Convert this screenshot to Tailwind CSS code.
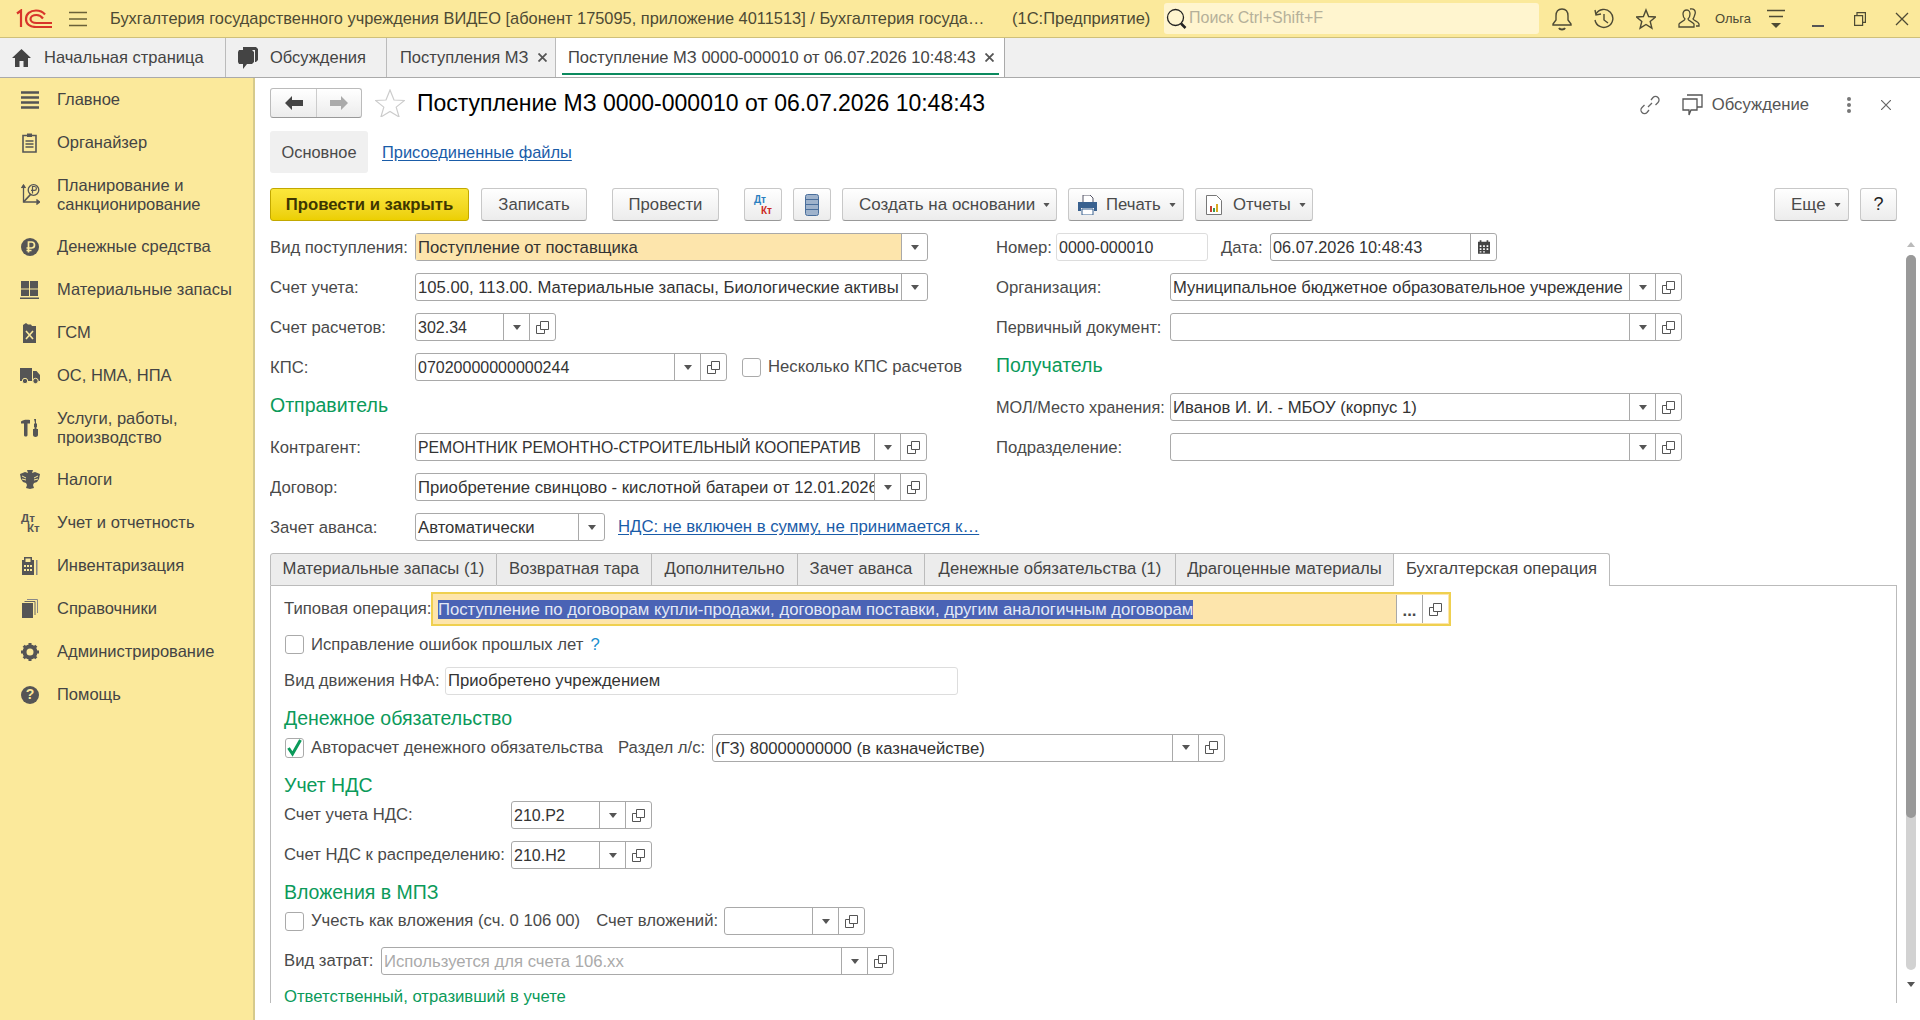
<!DOCTYPE html>
<html lang="ru">
<head>
<meta charset="UTF-8">
<title>Поступление МЗ</title>
<script src="https://cdn.jsdelivr.net/npm/@tailwindcss/browser@4"></script>
</head>
<body class="bg-white">
<svg class="hidden" xmlns="http://www.w3.org/2000/svg">
  <symbol id="dd" viewBox="0 0 8 5"><path d="M0 0h8L4 5z" fill="#555"/></symbol>
  <symbol id="copy" viewBox="0 0 13 13"><path d="M4.500 4.500H.500v8h8v-4M4.500.500h8v8h-8z" fill="none" stroke="#555"/></symbol>
</svg>
<div class="flex h-[1020px] w-[1920px] flex-col overflow-hidden font-['Liberation_Sans',Arial,sans-serif] text-[16.7px] text-[#4a4a4a]">

  <!-- top bar -->
  <header class="flex h-[38px] shrink-0 items-center border-b border-[#cfc07a] bg-[#fbe99b] text-[16.500px]">
    <svg class="ml-[15px] h-[19px] w-[38px]" viewBox="0 0 38 19" fill="none" stroke="#d8342a" stroke-width="2.200">
      <path d="M2 4.500 6 1.500V18"/>
      <path d="M30 5.500C28 3 25 1.500 21 1.500 15 1.500 11 5 11 10s4 8 10 8h16"/>
      <path d="M28 9.500C26.500 7.500 24 6 21.500 6 18 6 15.500 7.800 15.500 10s2.500 4 6 4H37"/>
    </svg>
    <svg class="ml-[16px] h-[16px] w-[18px]" viewBox="0 0 18 16" stroke="#6a6138" stroke-width="1.500"><path d="M0 1.500h18M0 8h18M0 14.500h18"/></svg>
    <div class="ml-[23px] w-[902px] truncate text-[16.400px] text-[#4d4a34]">Бухгалтерия государственного учреждения ВИДЕО [абонент 175095, приложение 4011513] / Бухгалтерия госуда…</div>
    <div class="w-[152px] whitespace-nowrap text-[#4d4a34]">(1С:Предприятие)</div>
    <div class="flex h-[31px] w-[375px] items-center rounded-[3px] bg-[#fff5cf]">
      <svg class="ml-[2px] h-[22px] w-[21px]" viewBox="0 0 21 22" fill="none" stroke="#222"><circle cx="9.500" cy="9.500" r="8" stroke-width="1.300"/><path d="M15 15.500l4.500 4.500" stroke-width="2.500"/></svg>
      <span class="ml-[2px] -translate-y-px text-[16px] text-[#b5b09a]">Поиск Ctrl+Shift+F</span>
    </div>
    <div class="ml-[13px] flex items-center gap-[22px]">
      <svg class="h-[24px] w-[20px]" viewBox="0 0 20 24" fill="none" stroke="#4d4a34" stroke-width="1.400"><path d="M10 2c-4 0-6 3-6 7v4l-3 4v1h18v-1l-3-4V9c0-4-2-7-6-7z"/><path d="M7 21c1 2 5 2 6 0" stroke-width="2"/></svg>
      <svg class="h-[22px] w-[20px]" viewBox="0 0 20 22" fill="none" stroke="#4d4a34" stroke-width="1.400"><path d="M2 6A9 9 0 1 1 1 12"/><path d="M1 2l1 5 5-1" /><path d="M10 6v6l4 3"/></svg>
      <svg class="h-[22px] w-[20px]" viewBox="0 0 20 22" fill="none" stroke="#4d4a34" stroke-width="1.400"><path d="M10 2l2.600 6.500 6.900.500-5.300 4.400 1.700 6.800-5.900-3.700-5.900 3.700 1.700-6.800L.500 9l6.900-.500z"/></svg>
      <svg class="h-[22px] w-[22px]" viewBox="0 0 22 22" fill="none" stroke="#4d4a34" stroke-width="1.300"><path d="M9 2c-3 0-4 2-4 4s1 4 2 5c0 2-5 3-6 5v3h15v-3c-1-2-6-3-6-5 1-1 2-3 2-5s-1-4-3-4z"/><path d="M12 1c4-1 6 2 5 5s-1 4-2 5c1 2 5 2 6 5v2h-3"/></svg>
    </div>
    <span class="ml-[15px] w-[36px] text-[13px] whitespace-nowrap text-[#4d4a34]">Ольга</span>
    <svg class="ml-[16px] h-[20px] w-[18px]" viewBox="0 0 18 20" stroke="#4d4a34"><path d="M0 1.500h18M2 7.500h14" stroke-width="1.300"/><path d="M4 14h10l-5 5z" fill="#4d4a34" stroke="none"/></svg>
    <div class="ml-[27px] h-[1px] w-[12px] translate-y-[7px] border-b-2 border-[#555]"></div>
    <svg class="ml-[30px] h-[14px] w-[12px]" viewBox="0 0 12 14" fill="none" stroke="#4d4a34" stroke-width="1.200"><path d="M.600 3.600h8v9.800h-8zM3 3.600V.600h8.400v9.800H8.600"/></svg>
    <svg class="ml-[29px] h-[14px] w-[14px]" viewBox="0 0 14 14" stroke="#4d4a34" stroke-width="1.300"><path d="M1 1l12 12M13 1L1 13"/></svg>
  </header>

  <!-- open windows -->
  <nav class="flex h-[40px] shrink-0 border-b border-[#aaa] bg-[#f0f0f0] text-[16.500px] text-[#444]">
    <div class="flex w-[226px] items-center border-r border-[#bbb]">
      <svg class="ml-[12px] h-[18px] w-[19px]" viewBox="0 0 19 18" fill="#444"><path d="M9.500 0L0 9h3v9h4.500v-6h4v6H16V9h3z"/></svg>
      <span class="ml-[13px]">Начальная страница</span>
    </div>
    <div class="flex w-[161px] items-center border-r border-[#bbb]">
      <svg class="ml-[12px] h-[24px] w-[20px]" viewBox="0 0 20 24" fill="#444"><path d="M5 1h13l2 2v11l-2 2h-1V4H5z"/><path d="M1 4h13l2 2v10l-2 2H9l-4 5v-5H1l-1-2V6z"/></svg>
      <span class="ml-[12px]">Обсуждения</span>
    </div>
    <div class="flex w-[169px] items-center border-r border-[#bbb]">
      <span class="ml-[13px]">Поступления МЗ</span>
      <svg class="ml-[9px] h-[9px] w-[9px]" viewBox="0 0 9 9" stroke="#555" stroke-width="1.800"><path d="M.500.500l8 8M8.500.500l-8 8"/></svg>
    </div>
    <div class="relative flex w-[449px] items-center border-r border-[#aaa] bg-white">
      <span class="ml-[12px]">Поступление МЗ 0000-000010 от 06.07.2026 10:48:43</span>
      <svg class="ml-[9px] h-[9px] w-[9px]" viewBox="0 0 9 9" stroke="#555" stroke-width="1.800"><path d="M.500.500l8 8M8.500.500l-8 8"/></svg>
      <div class="absolute right-[5px] bottom-[2px] left-[6px] h-[2px] bg-[#0b8a5e]"></div>
    </div>
  </nav>

  <div class="flex min-h-0 flex-1">
    <!-- sections panel -->
    <aside class="w-[255px] shrink-0 border-r-2 border-[#d6ca8c] bg-[#fbe99b] text-[16.500px] text-[#444]">
      <div class="flex h-[43px] items-center">
        <svg class="ml-[21px] h-[18px] w-[18px]" viewBox="0 0 18 18" stroke="#555" stroke-width="2.500"><path d="M0 1.500h18M0 6.500h18M0 11.500h18M0 16.500h18"/></svg>
        <span class="ml-[18px]">Главное</span>
      </div>
      <div class="flex h-[43px] items-center">
        <svg class="ml-[22px] h-[20px] w-[15px]" viewBox="0 0 15 20" fill="none" stroke="#555" stroke-width="1.600"><path d="M1 2.500h13V19H1z"/><path d="M5 .500h5V4H5z" fill="#555" stroke="none"/><path d="M3.500 8h8M3.500 11h8M3.500 14h8" stroke-width="1.300"/></svg>
        <span class="ml-[20px]">Органайзер</span>
      </div>
      <div class="flex h-[61px] items-center">
        <svg class="ml-[20px] h-[21px] w-[20px]" viewBox="0 0 20 21" fill="none" stroke="#555" stroke-width="1.300"><path d="M3.500 1v17h16"/><path d="M1.500 4l2-3 2 3M16.500 15.500l3 2.500-3 2.500" fill="#555"/><path d="M3.500 18L11 10" stroke-width="1.800"/><circle cx="13.500" cy="6" r="5.300"/><path d="M12.500 9.500v-7h2a1.800 1.800 0 0 1 0 3.800h-3.500" stroke-width="1.200"/></svg>
        <span class="ml-[17px] leading-[19px]">Планирование и<br>санкционирование</span>
      </div>
      <div class="flex h-[43px] items-center">
        <svg class="ml-[21px] h-[18px] w-[18px]" viewBox="0 0 18 18"><circle cx="9" cy="9" r="9" fill="#555"/><path d="M7.500 14.500V4h3a3 3 0 0 1 0 6H5.500M5.500 12.500h5" fill="none" stroke="#fbe99b" stroke-width="1.700"/></svg>
        <span class="ml-[18px]">Денежные средства</span>
      </div>
      <div class="flex h-[43px] items-center">
        <svg class="ml-[20px] h-[18px] w-[19px]" viewBox="0 0 19 18" fill="#555"><path d="M1 0h8v7.500H1zM10 0h8v7.500h-8zM1 8.500h8V15H1zM10 8.500h8V15h-8zM0 16.500h19V18H0z"/></svg>
        <span class="ml-[18px]">Материальные запасы</span>
      </div>
      <div class="flex h-[43px] items-center">
        <svg class="ml-[23px] h-[20px] w-[13px]" viewBox="0 0 13 20"><path d="M3 0l2 1.500h3L9 3h4v17H0V2z" fill="#555"/><path d="M3 8l7 8M10 8l-7 8" stroke="#fbe99b" stroke-width="1.600"/></svg>
        <span class="ml-[21px]">ГСМ</span>
      </div>
      <div class="flex h-[43px] items-center">
        <svg class="ml-[20px] h-[16px] w-[20px]" viewBox="0 0 20 16" fill="#555"><path d="M0 0h12v13H0zM13 3h3.500L20 7v6h-7z"/><circle cx="5" cy="13" r="2.700" stroke="#fbe99b"/><circle cx="15.500" cy="13" r="2.700" stroke="#fbe99b"/></svg>
        <span class="ml-[17px]">ОС, НМА, НПА</span>
      </div>
      <div class="flex h-[61px] items-center">
        <svg class="ml-[21px] h-[18px] w-[18px]" viewBox="0 0 18 18" fill="#555"><path d="M0 2.500C2 .500 6 .500 9 1v3.500H6.500V16c0 2-3.500 2-3.500 0V4.500H0zM13 0h2v4l1 1v3h-.500v2H17v6c0 2.500-5 2.500-5 0v-6h1.500V8H13V5l1-1z"/></svg>
        <span class="ml-[18px] leading-[19px]">Услуги, работы,<br>производство</span>
      </div>
      <div class="flex h-[43px] items-center">
        <svg class="ml-[20px] h-[19px] w-[20px]" viewBox="0 0 20 19" fill="#555"><path d="M7 0h6l-1 3 3-1 5 2-1 5-2 3-3 1-1 2 1 3-4 1-4-1 1-3-1-2-3-1-2-3-1-5 5-2 3 1z"/><path d="M2 6l4 2M2 9l4 1M18 6l-4 2M18 9l-4 1" stroke="#fbe99b"/></svg>
        <span class="ml-[17px]">Налоги</span>
      </div>
      <div class="flex h-[43px] items-center">
        <div class="ml-[21px] w-[19px] text-[11.500px] leading-[10px] font-bold text-[#555]">Дт<div class="pl-[6px]">Кт</div></div>
        <span class="ml-[17px]">Учет и отчетность</span>
      </div>
      <div class="flex h-[43px] items-center">
        <svg class="ml-[22px] h-[19px] w-[16px]" viewBox="0 0 16 19" fill="#555"><path d="M2 4V1h8v3h2v15H0V4z"/><path d="M3.500 2.500h5V6h-5z" fill="#fbe99b"/><path d="M2 9h2v2H2zM5 9h2v2H5zM8 9h2v2H8zM2 13h2v2H2zM5 13h2v2H5zM8 13h2v2H8z" fill="#fbe99b"/><path d="M14 4h1.500v15H14z" fill="#888"/></svg>
        <span class="ml-[19px]">Инвентаризация</span>
      </div>
      <div class="flex h-[43px] items-center">
        <svg class="ml-[22px] h-[19px] w-[16px]" viewBox="0 0 16 19" fill="#555"><path d="M0 4h11v15H0z"/><path d="M2.500 2.500h10.500V16" fill="none" stroke="#666"/><path d="M5 .500h10.500V14" fill="none" stroke="#888"/></svg>
        <span class="ml-[19px]">Справочники</span>
      </div>
      <div class="flex h-[43px] items-center">
        <svg class="ml-[21px] h-[18px] w-[18px]" viewBox="0 0 18 18"><circle cx="9" cy="9" r="5.500" fill="none" stroke="#555" stroke-width="4"/><path d="M9 0v3.500M9 14.500V18M0 9h3.500M14.500 9H18M2.700 2.700l2.500 2.500M12.800 12.800l2.500 2.500M15.300 2.700l-2.500 2.500M5.200 12.800l-2.500 2.500" stroke="#555" stroke-width="3"/></svg>
        <span class="ml-[18px]">Администрирование</span>
      </div>
      <div class="flex h-[43px] items-center">
        <div class="ml-[21px] flex h-[18px] w-[18px] items-center justify-center rounded-full bg-[#555] text-[14px] font-bold text-[#fbe99b]">?</div>
        <span class="ml-[18px]">Помощь</span>
      </div>
    </aside>

    <!-- document form -->
    <main class="relative min-w-0 flex-1 pt-[10px] pl-[15px]">
      <div class="flex h-[30px] items-center">
        <div class="flex h-[30px] w-[92px] rounded-[3px] border border-[#bbb] border-b-[#999] bg-linear-to-b from-white to-[#ececec]">
          <div class="flex w-[46px] items-center justify-center border-r border-[#ccc]">
            <svg class="h-[14px] w-[18px]" viewBox="0 0 18 14" fill="#444"><path d="M0 7l7-7v4h11v6H7v4z"/></svg>
          </div>
          <div class="flex flex-1 items-center justify-center">
            <svg class="h-[14px] w-[18px]" viewBox="0 0 18 14" fill="#aaa"><path d="M18 7l-7-7v4H0v6h11v4z"/></svg>
          </div>
        </div>
        <svg class="ml-[13px] h-[28px] w-[30px]" viewBox="0 0 30 28" fill="#fff" stroke="#ccc" stroke-width="1.200"><path d="M15 1l4 10 10.500.500-8.300 6.600 2.900 9.900L15 22.400 5.900 28l2.900-9.900L.500 11.500 11 11z"/></svg>
        <h1 class="ml-[12px] text-[23px] font-normal whitespace-nowrap text-black">Поступление МЗ 0000-000010 от 06.07.2026 10:48:43</h1>
        <div class="absolute top-[14px] right-[29px] flex items-center">
          <svg class="h-[20px] w-[20px]" viewBox="0 0 20 20" fill="none" stroke="#666" stroke-width="1.300"><path d="M8 12l4-4M11 5l2-2.500a3.500 3.500 0 0 1 5 5L15.500 10M9 15l-2 2.500a3.500 3.500 0 0 1-5-5L4.500 10"/></svg>
          <svg class="ml-[22px] h-[22px] w-[21px]" viewBox="0 0 21 22" fill="none" stroke="#555" stroke-width="1.300"><path d="M1 5h14v11H9l-2 5v-5H1zM5 1h15v12h-5"/></svg>
          <span class="ml-[9px] text-[#555]">Обсуждение</span>
          <svg class="ml-[38px] h-[16px] w-[4px]" viewBox="0 0 4 16" fill="#777"><circle cx="2" cy="2" r="2"/><circle cx="2" cy="8" r="2"/><circle cx="2" cy="14" r="2"/></svg>
          <svg class="ml-[30px] h-[10px] w-[10px]" viewBox="0 0 10 10" stroke="#666" stroke-width="1.200"><path d="M0 0l10 10M10 0L0 10"/></svg>
        </div>
      </div>

      <div class="mt-[13px] flex h-[42px] items-center text-[16.400px]">
        <div class="flex h-[42px] w-[98px] items-center justify-center rounded-[3px] bg-[#f0f0f0]">Основное</div>
        <a class="ml-[14px] text-[#1a5ca8] underline underline-offset-2">Присоединенные файлы</a>
      </div>

      <div class="mt-[15px] flex h-[33px] pr-[23px]">
        <div class="flex w-[199px] items-center justify-center rounded-[3px] border border-[#c2a800] bg-linear-to-b from-[#fbe73a] to-[#eccf00] font-bold text-[#3e3600]">Провести и закрыть</div>
        <div class="ml-[12px] flex w-[106px] items-center justify-center rounded-[3px] border border-[#c8c8c8] border-b-[#999] bg-linear-to-b from-white to-[#ececec]">Записать</div>
        <div class="ml-[25px] flex w-[107px] items-center justify-center rounded-[3px] border border-[#c8c8c8] border-b-[#999] bg-linear-to-b from-white to-[#ececec]">Провести</div>
        <div class="ml-[25px] flex w-[38px] flex-col justify-center rounded-[3px] border border-[#c8c8c8] border-b-[#999] bg-linear-to-b from-white to-[#ececec] pl-[9px] text-[10px] leading-[11px] font-bold">
          <span class="text-[#2a7fc0]">Дт</span><span class="pl-[7px] text-[#cc2a1e]">Кт</span>
        </div>
        <div class="ml-[11px] flex w-[38px] items-center justify-center rounded-[3px] border border-[#c8c8c8] border-b-[#999] bg-linear-to-b from-white to-[#ececec]">
          <svg class="h-[22px] w-[14px]" viewBox="0 0 14 22" fill="#9fb3cc" stroke="#4a6f9c"><rect x=".500" y=".500" width="13" height="21" rx="2"/><path d="M.500 5.500h13M.500 10.500h13M.500 15.500h13"/></svg>
        </div>
        <div class="ml-[11px] flex w-[215px] items-center rounded-[3px] border border-[#c8c8c8] border-b-[#999] bg-linear-to-b from-white to-[#ececec] pl-[16px] text-[17px]">Создать на основании <svg class="ml-[8px] h-[4px] w-[7px]" viewBox="0 0 8 5"><use href="#dd"/></svg></div>
        <div class="ml-[11px] flex w-[116px] items-center rounded-[3px] border border-[#c8c8c8] border-b-[#999] bg-linear-to-b from-white to-[#ececec] pl-[9px]">
          <svg class="h-[20px] w-[19px]" viewBox="0 0 19 20"><path d="M5 0h7l3 3v5H5z" fill="#fff" stroke="#556"/><path d="M0 7h19v9h-3v-3H3v3H0z" fill="#39618f"/><path d="M4 14h11v6H4z" fill="#fff" stroke="#39618f"/></svg>
          <span class="ml-[9px]">Печать</span>
          <svg class="ml-[8px] h-[4px] w-[7px]" viewBox="0 0 8 5"><use href="#dd"/></svg>
        </div>
        <div class="ml-[11px] flex w-[118px] items-center rounded-[3px] border border-[#c8c8c8] border-b-[#999] bg-linear-to-b from-white to-[#ececec] pl-[10px]">
          <svg class="h-[20px] w-[16px]" viewBox="0 0 16 20"><path d="M.500.500h10l5 5v14H.500z" fill="#fff" stroke="#777"/><path d="M4 11h2v6H4z" fill="#c9402f"/><path d="M7 13h2v4H7z" fill="#3c9a50"/><path d="M10 9h2v8h-2z" fill="#d8a820"/></svg>
          <span class="ml-[11px]">Отчеты</span>
          <svg class="ml-[8px] h-[4px] w-[7px]" viewBox="0 0 8 5"><use href="#dd"/></svg>
        </div>
        <div class="ml-auto flex w-[75px] items-center rounded-[3px] border border-[#c8c8c8] border-b-[#999] bg-linear-to-b from-white to-[#ececec] pl-[16px] text-[17px]">Еще <svg class="ml-[8px] h-[4px] w-[7px]" viewBox="0 0 8 5"><use href="#dd"/></svg></div>
        <div class="ml-[11px] flex w-[37px] items-center justify-center rounded-[3px] border border-[#c8c8c8] border-b-[#999] bg-linear-to-b from-white to-[#ececec] text-[18px] text-[#222]">?</div>
      </div>

      <div class="mt-[12px] h-[787px] overflow-hidden">
        <div class="flex h-[308px]">
          <!-- left column -->
          <div class="w-[726px]">
            <div class="flex h-[28px] items-center">
              <span class="w-[145px] shrink-0 pt-[1px]">Вид поступления:</span>
              <div class="flex h-[28px] w-[513px] rounded-[3px] border border-[#a9a9a9] bg-white">
                <div class="min-w-0 flex-1 truncate bg-[#fde5ac] pl-[2px] leading-[27px] text-[#333]">Поступление от поставщика</div>
                <div class="flex w-[26px] items-center justify-center border-l border-[#a9a9a9]"><svg class="h-[5px] w-[8px]"><use href="#dd"/></svg></div>
              </div>
            </div>
            <div class="mt-[12px] flex h-[28px] items-center">
              <span class="w-[145px] shrink-0 pt-[1px]">Счет учета:</span>
              <div class="flex h-[28px] w-[513px] rounded-[3px] border border-[#a9a9a9] bg-white">
                <div class="min-w-0 flex-1 truncate pl-[2px] leading-[27px] text-[#333]">105.00, 113.00. Материальные запасы, Биологические активы</div>
                <div class="flex w-[26px] items-center justify-center border-l border-[#a9a9a9]"><svg class="h-[5px] w-[8px]"><use href="#dd"/></svg></div>
              </div>
            </div>
            <div class="mt-[12px] flex h-[28px] items-center">
              <span class="w-[145px] shrink-0 pt-[1px]">Счет расчетов:</span>
              <div class="flex h-[28px] w-[141px] rounded-[3px] border border-[#a9a9a9] bg-white">
                <div class="min-w-0 flex-1 truncate pl-[2px] text-[16px] leading-[27px] text-[#333]">302.34</div>
                <div class="flex w-[26px] items-center justify-center border-l border-[#a9a9a9]"><svg class="h-[5px] w-[8px]"><use href="#dd"/></svg></div>
                <div class="flex w-[26px] items-center justify-center border-l border-[#a9a9a9]"><svg class="h-[13px] w-[13px]"><use href="#copy"/></svg></div>
              </div>
            </div>
            <div class="mt-[12px] flex h-[28px] items-center">
              <span class="w-[145px] shrink-0 pt-[1px]">КПС:</span>
              <div class="flex h-[28px] w-[312px] rounded-[3px] border border-[#a9a9a9] bg-white">
                <div class="min-w-0 flex-1 truncate pl-[2px] text-[16px] leading-[27px] text-[#333]">07020000000000244</div>
                <div class="flex w-[26px] items-center justify-center border-l border-[#a9a9a9]"><svg class="h-[5px] w-[8px]"><use href="#dd"/></svg></div>
                <div class="flex w-[26px] items-center justify-center border-l border-[#a9a9a9]"><svg class="h-[13px] w-[13px]"><use href="#copy"/></svg></div>
              </div>
              <div class="ml-[15px] h-[19px] w-[19px] rounded-[3px] border border-[#aaa]"></div>
              <span class="ml-[7px] whitespace-nowrap">Несколько КПС расчетов</span>
            </div>
            <div class="flex h-[52px] items-center pb-[2px] text-[19.500px] text-[#0b9a5a]">Отправитель</div>
            <div class="flex h-[28px] items-center">
              <span class="w-[145px] shrink-0 pt-[1px]">Контрагент:</span>
              <div class="flex h-[28px] w-[512px] rounded-[3px] border border-[#a9a9a9] bg-white">
                <div class="min-w-0 flex-1 truncate pl-[2px] text-[15.800px] leading-[27px] text-[#333]">РЕМОНТНИК РЕМОНТНО-СТРОИТЕЛЬНЫЙ КООПЕРАТИВ</div>
                <div class="flex w-[26px] items-center justify-center border-l border-[#a9a9a9]"><svg class="h-[5px] w-[8px]"><use href="#dd"/></svg></div>
                <div class="flex w-[26px] items-center justify-center border-l border-[#a9a9a9]"><svg class="h-[13px] w-[13px]"><use href="#copy"/></svg></div>
              </div>
            </div>
            <div class="mt-[12px] flex h-[28px] items-center">
              <span class="w-[145px] shrink-0 pt-[1px]">Договор:</span>
              <div class="flex h-[28px] w-[512px] rounded-[3px] border border-[#a9a9a9] bg-white">
                <div class="min-w-0 flex-1 overflow-hidden pl-[2px] leading-[27px] whitespace-nowrap text-[#333]">Приобретение свинцово - кислотной батареи от 12.01.2026</div>
                <div class="flex w-[26px] items-center justify-center border-l border-[#a9a9a9]"><svg class="h-[5px] w-[8px]"><use href="#dd"/></svg></div>
                <div class="flex w-[26px] items-center justify-center border-l border-[#a9a9a9]"><svg class="h-[13px] w-[13px]"><use href="#copy"/></svg></div>
              </div>
            </div>
            <div class="mt-[12px] flex h-[28px] items-center">
              <span class="w-[145px] shrink-0 pt-[1px]">Зачет аванса:</span>
              <div class="flex h-[28px] w-[190px] rounded-[3px] border border-[#a9a9a9] bg-white">
                <div class="min-w-0 flex-1 truncate pl-[2px] leading-[27px] text-[#333]">Автоматически</div>
                <div class="flex w-[26px] items-center justify-center border-l border-[#a9a9a9]"><svg class="h-[5px] w-[8px]"><use href="#dd"/></svg></div>
              </div>
              <a class="ml-[13px] whitespace-nowrap text-[16.800px] text-[#1a5ca8] underline underline-offset-2">НДС: не включен в сумму, не принимается к…</a>
            </div>
          </div>
          <!-- right column -->
          <div class="flex-1">
            <div class="flex h-[28px] items-center">
              <span class="w-[60px] shrink-0 pt-[1px]">Номер:</span>
              <div class="h-[28px] w-[152px] rounded-[3px] border border-[#ddd] pl-[2px] text-[16px] leading-[27px] text-[#333]">0000-000010</div>
              <span class="ml-[13px] w-[49px] shrink-0 pt-[1px]">Дата:</span>
              <div class="flex h-[28px] w-[227px] rounded-[3px] border border-[#a9a9a9] bg-white">
                <div class="min-w-0 flex-1 truncate pl-[2px] text-[16.300px] leading-[27px] text-[#333]">06.07.2026 10:48:43</div>
                <div class="flex w-[26px] items-center justify-center border-l border-[#a9a9a9]">
                  <svg class="h-[14px] w-[12px]" viewBox="0 0 14 16" fill="#444"><path d="M2 0h2v2h6V0h2v2h2v14H0V2h2z"/><path d="M2 6h2v2H2zM6 6h2v2H6zM10 6h2v2h-2zM2 9.500h2v2H2zM6 9.500h2v2H6zM10 9.500h2v2h-2zM2 13h2v1.500H2zM6 13h2v1.500H6z" fill="#fff"/></svg>
                </div>
              </div>
            </div>
            <div class="mt-[12px] flex h-[28px] items-center">
              <span class="w-[174px] shrink-0 pt-[1px]">Организация:</span>
              <div class="flex h-[28px] w-[512px] rounded-[3px] border border-[#a9a9a9] bg-white">
                <div class="min-w-0 flex-1 truncate pl-[2px] text-[16.600px] leading-[27px] text-[#333]">Муниципальное бюджетное образовательное учреждение</div>
                <div class="flex w-[26px] items-center justify-center border-l border-[#a9a9a9]"><svg class="h-[5px] w-[8px]"><use href="#dd"/></svg></div>
                <div class="flex w-[26px] items-center justify-center border-l border-[#a9a9a9]"><svg class="h-[13px] w-[13px]"><use href="#copy"/></svg></div>
              </div>
            </div>
            <div class="mt-[12px] flex h-[28px] items-center">
              <span class="w-[174px] shrink-0 pt-[1px] text-[16.300px] whitespace-nowrap">Первичный документ:</span>
              <div class="flex h-[28px] w-[512px] rounded-[3px] border border-[#a9a9a9] bg-white">
                <div class="min-w-0 flex-1"></div>
                <div class="flex w-[26px] items-center justify-center border-l border-[#a9a9a9]"><svg class="h-[5px] w-[8px]"><use href="#dd"/></svg></div>
                <div class="flex w-[26px] items-center justify-center border-l border-[#a9a9a9]"><svg class="h-[13px] w-[13px]"><use href="#copy"/></svg></div>
              </div>
            </div>
            <div class="flex h-[52px] items-center pb-[2px] text-[19.500px] text-[#0b9a5a]">Получатель</div>
            <div class="flex h-[28px] items-center">
              <span class="w-[174px] shrink-0 pt-[1px] text-[16.300px] whitespace-nowrap">МОЛ/Место хранения:</span>
              <div class="flex h-[28px] w-[512px] rounded-[3px] border border-[#a9a9a9] bg-white">
                <div class="min-w-0 flex-1 truncate pl-[2px] leading-[27px] text-[#333]">Иванов И. И. - МБОУ (корпус 1)</div>
                <div class="flex w-[26px] items-center justify-center border-l border-[#a9a9a9]"><svg class="h-[5px] w-[8px]"><use href="#dd"/></svg></div>
                <div class="flex w-[26px] items-center justify-center border-l border-[#a9a9a9]"><svg class="h-[13px] w-[13px]"><use href="#copy"/></svg></div>
              </div>
            </div>
            <div class="mt-[12px] flex h-[28px] items-center">
              <span class="w-[174px] shrink-0 pt-[1px]">Подразделение:</span>
              <div class="flex h-[28px] w-[512px] rounded-[3px] border border-[#a9a9a9] bg-white">
                <div class="min-w-0 flex-1"></div>
                <div class="flex w-[26px] items-center justify-center border-l border-[#a9a9a9]"><svg class="h-[5px] w-[8px]"><use href="#dd"/></svg></div>
                <div class="flex w-[26px] items-center justify-center border-l border-[#a9a9a9]"><svg class="h-[13px] w-[13px]"><use href="#copy"/></svg></div>
              </div>
            </div>
          </div>
        </div>

        <!-- tabs -->
        <div class="mt-[12px] mr-[23px] flex h-[33px] text-[#444]">
          <div class="flex w-[227px] items-center justify-center rounded-tl-[3px] border border-[#bbb] bg-[#ececec] pb-[2px]">Материальные запасы (1)</div>
          <div class="flex w-[155px] items-center justify-center border-y border-r border-[#bbb] bg-[#ececec] pb-[2px]">Возвратная тара</div>
          <div class="flex w-[146px] items-center justify-center border-y border-r border-[#bbb] bg-[#ececec] pb-[2px]">Дополнительно</div>
          <div class="flex w-[127px] items-center justify-center border-y border-r border-[#bbb] bg-[#ececec] pb-[2px]">Зачет аванса</div>
          <div class="flex w-[251px] items-center justify-center border-y border-r border-[#bbb] bg-[#ececec] pb-[2px]">Денежные обязательства (1)</div>
          <div class="flex w-[218px] items-center justify-center border-y border-r border-[#bbb] bg-[#ececec] pb-[2px]">Драгоценные материалы</div>
          <div class="flex w-[216px] items-center justify-center rounded-tr-[3px] border-t border-r border-[#bbb] pb-[2px]">Бухгалтерская операция</div>
          <div class="flex-1 border-b border-[#bbb]"></div>
        </div>
        <div class="mr-[23px] h-[417px] border-x border-[#bbb] pl-[13px]">
          <div class="flex h-[40px] items-center pt-[6px]">
            <span class="w-[147px] shrink-0 whitespace-nowrap">Типовая операция:</span>
            <div class="flex h-[34px] w-[1020px] border-2 border-[#efd050] bg-[#fde5ac] p-[1px]">
              <div class="flex min-w-0 flex-1 items-center pl-[4px]"><span class="bg-[#4a63b5] leading-[19px] text-[#e4e9f6]">Поступление по договорам купли-продажи, договорам поставки, другим аналогичным договорам</span></div>
              <div class="flex w-[26px] items-center justify-center border-l border-[#a9a9a9] bg-white pt-[4px] font-bold">...</div>
              <div class="flex w-[26px] items-center justify-center border-l border-[#a9a9a9] bg-white"><svg class="h-[13px] w-[13px]"><use href="#copy"/></svg></div>
            </div>
          </div>
          <div class="mt-[9px] flex h-[19px] items-center">
            <div class="ml-[1px] h-[19px] w-[19px] rounded-[3px] border border-[#aaa]"></div>
            <span class="ml-[7px] whitespace-nowrap">Исправление ошибок прошлых лет</span>
            <span class="ml-[7px] text-[#1a8fcf]">?</span>
          </div>
          <div class="mt-[13px] flex h-[28px] items-center">
            <span class="w-[161px] shrink-0 whitespace-nowrap">Вид движения НФА:</span>
            <div class="h-[28px] w-[513px] rounded-[3px] border border-[#ddd] pl-[2px] leading-[26px] text-[#333]">Приобретено учреждением</div>
          </div>
          <div class="flex h-[38px] items-center pt-[9px] text-[19.500px] text-[#0b9a5a]">Денежное обязательство</div>
          <div class="flex h-[29px] items-center">
            <svg class="ml-[1px] h-[20px] w-[19px]" viewBox="0 0 19 20" fill="none"><rect x=".500" y=".500" width="18" height="19" rx="2.500" stroke="#aaa"/><path d="M3.500 10l4 6 8-14" stroke="#0b9a5a" stroke-width="3"/></svg>
            <span class="ml-[7px] whitespace-nowrap">Авторасчет денежного обязательства</span>
            <span class="ml-[15px] whitespace-nowrap">Раздел л/с:</span>
            <div class="ml-[7px] flex h-[28px] w-[513px] rounded-[3px] border border-[#a9a9a9] bg-white">
              <div class="min-w-0 flex-1 truncate pl-[2px] leading-[27px] text-[#333]">(ГЗ) 80000000000 (в казначействе)</div>
              <div class="flex w-[26px] items-center justify-center border-l border-[#a9a9a9]"><svg class="h-[5px] w-[8px]"><use href="#dd"/></svg></div>
              <div class="flex w-[26px] items-center justify-center border-l border-[#a9a9a9]"><svg class="h-[13px] w-[13px]"><use href="#copy"/></svg></div>
            </div>
          </div>
          <div class="flex h-[39px] items-center pt-[8px] text-[19.500px] text-[#0b9a5a]">Учет НДС</div>
          <div class="flex h-[28px] items-center">
            <span class="w-[227px] shrink-0">Счет учета НДС:</span>
            <div class="flex h-[28px] w-[141px] rounded-[3px] border border-[#a9a9a9] bg-white">
              <div class="min-w-0 flex-1 truncate pl-[2px] text-[16px] leading-[27px] text-[#333]">210.Р2</div>
              <div class="flex w-[26px] items-center justify-center border-l border-[#a9a9a9]"><svg class="h-[5px] w-[8px]"><use href="#dd"/></svg></div>
              <div class="flex w-[26px] items-center justify-center border-l border-[#a9a9a9]"><svg class="h-[13px] w-[13px]"><use href="#copy"/></svg></div>
            </div>
          </div>
          <div class="mt-[12px] flex h-[28px] items-center">
            <span class="w-[227px] shrink-0 whitespace-nowrap">Счет НДС к распределению:</span>
            <div class="flex h-[28px] w-[141px] rounded-[3px] border border-[#a9a9a9] bg-white">
              <div class="min-w-0 flex-1 truncate pl-[2px] text-[16px] leading-[27px] text-[#333]">210.Н2</div>
              <div class="flex w-[26px] items-center justify-center border-l border-[#a9a9a9]"><svg class="h-[5px] w-[8px]"><use href="#dd"/></svg></div>
              <div class="flex w-[26px] items-center justify-center border-l border-[#a9a9a9]"><svg class="h-[13px] w-[13px]"><use href="#copy"/></svg></div>
            </div>
          </div>
          <div class="flex h-[38px] items-center pt-[9px] text-[19.500px] text-[#0b9a5a]">Вложения в МПЗ</div>
          <div class="flex h-[28px] items-center">
            <div class="ml-[1px] h-[19px] w-[19px] rounded-[3px] border border-[#aaa]"></div>
            <span class="ml-[7px] whitespace-nowrap">Учесть как вложения (сч. 0 106 00)</span>
            <span class="ml-[16px] whitespace-nowrap">Счет вложений:</span>
            <div class="ml-[6px] flex h-[28px] w-[141px] rounded-[3px] border border-[#a9a9a9] bg-white">
              <div class="min-w-0 flex-1"></div>
              <div class="flex w-[26px] items-center justify-center border-l border-[#a9a9a9]"><svg class="h-[5px] w-[8px]"><use href="#dd"/></svg></div>
              <div class="flex w-[26px] items-center justify-center border-l border-[#a9a9a9]"><svg class="h-[13px] w-[13px]"><use href="#copy"/></svg></div>
            </div>
          </div>
          <div class="mt-[12px] flex h-[28px] items-center">
            <span class="w-[97px] shrink-0 whitespace-nowrap">Вид затрат:</span>
            <div class="flex h-[28px] w-[513px] rounded-[3px] border border-[#a9a9a9] bg-white">
              <div class="min-w-0 flex-1 truncate pl-[2px] leading-[27px] text-[#aaa]">Используется для счета 106.хх</div>
              <div class="flex w-[26px] items-center justify-center border-l border-[#a9a9a9]"><svg class="h-[5px] w-[8px]"><use href="#dd"/></svg></div>
              <div class="flex w-[26px] items-center justify-center border-l border-[#a9a9a9]"><svg class="h-[13px] w-[13px]"><use href="#copy"/></svg></div>
            </div>
          </div>
          <div class="mt-[13px] leading-[18px] text-[#0b9a5a]">Ответственный, отразивший в учете</div>
        </div>
      </div>

      <!-- scrollbar over the form -->
      <div class="absolute top-[164px] right-[4px] flex w-[10px] flex-col items-center">
        <svg class="h-[5px] w-[8px] rotate-180 opacity-40"><use href="#dd"/></svg>
        <div class="mt-[8px] h-[715px] w-[10px] rounded-full bg-[#d2d2d2]"><div class="h-[563px] rounded-full bg-[#999]"></div></div>
        <svg class="mt-[12px] h-[5px] w-[8px]"><use href="#dd"/></svg>
      </div>
    </main>
  </div>
</div>
</body>
</html>
